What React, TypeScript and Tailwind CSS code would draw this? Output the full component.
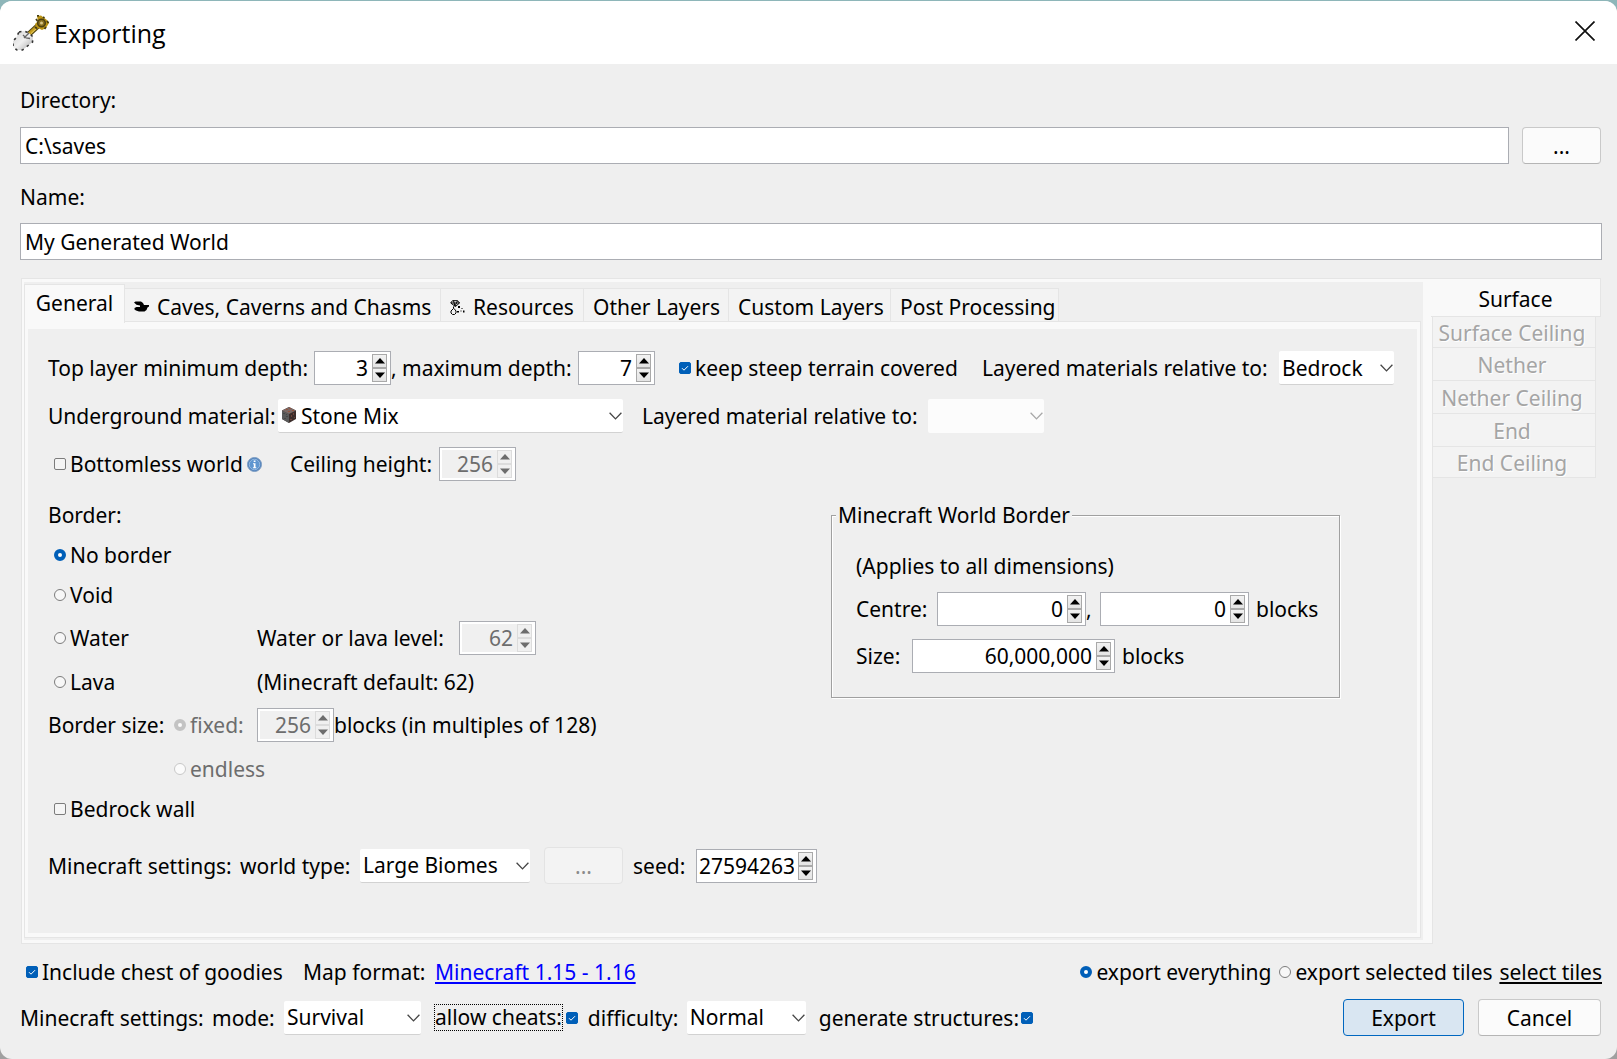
import { useId, useState } from "react";
import type { ReactNode } from "react";
import clsx from "clsx";

function Spinner({ id, label, value, width, disabled = false }: { id: string; label?: string; value: string; width: string; disabled?: boolean }) {
  const [text, setText] = useState(value);
  const step = (by: number) => {
    const next = Number(text.replace(/,/g, "")) + by;
    setText(value.includes(",") ? next.toLocaleString("en-US") : String(next));
  };
  const arrow = clsx(
    "flex h-3.5 w-[15px] items-center justify-center border",
    disabled ? "border-[#dcdcdc] bg-[#f0f0f0] text-[#6d6d6d]" : "border-[#a9a9a9] bg-linear-to-b from-[#f2f2f2] to-[#e4e4e4] text-black",
  );
  return (
    <div className={clsx("flex h-[34px] shrink-0 border border-[#abadb3] bg-white p-0.5", width)}>
      <input
        id={id}
        aria-label={label}
        value={text}
        onChange={(e) => setText(e.target.value)}
        disabled={disabled}
        className={clsx("h-full min-w-0 flex-1 pr-1 text-right outline-none", disabled && "bg-[#f0f0f0] text-[#6d6d6d]")}
      />
      <div className="flex flex-col pr-px">
        <button type="button" aria-label="Increase" disabled={disabled} onClick={() => step(1)} className={arrow}>
          <svg viewBox="0 0 10 6" className="h-1.5 w-2.5 shrink-0" fill="currentColor"><path d="M5 0 10 5.5H0z" /></svg>
        </button>
        <button type="button" aria-label="Decrease" disabled={disabled} onClick={() => step(-1)} className={arrow}>
          <svg viewBox="0 0 10 6" className="h-1.5 w-2.5 shrink-0" fill="currentColor"><path d="M5 6 10 .5H0z" /></svg>
        </button>
      </div>
    </div>
  );
}

function Select({ id, options, width, disabled = false, icon }: { id: string; options: string[]; width: string; disabled?: boolean; icon?: ReactNode }) {
  return (
    <div className={clsx("relative flex shrink-0", width)}>
      <select
        id={id}
        disabled={disabled}
        className={clsx(
          "h-[34px] w-full appearance-none rounded-xs pr-4 outline-none",
          icon ? "pl-[23px]" : "pl-[3px]",
          disabled ? "bg-[#fcfcfc] opacity-100" : "border-b border-[#d2d2d2] bg-white",
        )}
      >
        {options.map((o) => (
          <option key={o}>{o}</option>
        ))}
      </select>
      {icon && <span className="pointer-events-none absolute top-2 left-1">{icon}</span>}
      <svg
        viewBox="0 0 13 8"
        className={clsx("pointer-events-none absolute top-[13px] right-px h-2 w-[13px]", disabled ? "text-[#a8a8a8]" : "text-[#454545]")}
        fill="none"
        stroke="currentColor"
        strokeWidth="1.3"
      >
        <path d="M.6.8 6.5 6.9 12.4.8" />
      </svg>
    </div>
  );
}

function Box({ id, checked = false }: { id: string; checked?: boolean }) {
  return (
    <span className="relative flex size-3 shrink-0">
      <input
        id={id}
        type="checkbox"
        defaultChecked={checked}
        className="peer size-3 appearance-none rounded-xs border border-[#7c7c7c] bg-[#f5f5f5] checked:border-[#005fb8] checked:bg-[#005fb8]"
      />
      <svg viewBox="0 0 12 12" className="pointer-events-none absolute inset-0 hidden size-3 peer-checked:block" fill="none" stroke="#fff" strokeWidth="1">
        <path d="M3 6.2 5 8.2 9 4.2" />
      </svg>
    </span>
  );
}

function Check({ text, checked, width }: { text: string; checked?: boolean; width?: string }) {
  const id = useId();
  return (
    <div className={clsx("flex shrink-0 items-center gap-1", width)}>
      <Box id={id} checked={checked} />
      <label htmlFor={id}>{text}</label>
    </div>
  );
}

function Radio({ text, name, checked, disabled, width }: { text: string; name: string; checked?: boolean; disabled?: boolean; width?: string }) {
  const id = useId();
  return (
    <div className={clsx("flex shrink-0 items-center gap-1", width)}>
      <input
        id={id}
        type="radio"
        name={name}
        defaultChecked={checked}
        disabled={disabled}
        className="size-3 shrink-0 appearance-none rounded-full border border-[#7c7c7c] bg-[#f7f7f7] checked:border-4 checked:border-[#005fb8] checked:bg-white disabled:border-[#c8c8c8] disabled:bg-[#fbfbfb] disabled:checked:border-[#c3c3c3]"
      />
      <label htmlFor={id} className={clsx(disabled && "text-[#6d6d6d]")}>{text}</label>
    </div>
  );
}

function ShovelIcon() {
  return (
    <svg viewBox="0 0 36 36" className="size-9 shrink-0">
      <defs>
        <linearGradient id="blade" x1="0" y1="0" x2="1" y2="1">
          <stop offset="0" stopColor="#d2d2d2" />
          <stop offset=".5" stopColor="#f0f0f0" />
          <stop offset="1" stopColor="#a8a8a8" />
        </linearGradient>
      </defs>
      <path d="M15 20 28 8" stroke="#4d4212" strokeWidth="5.500" />
      <path d="M16 19 28 8" stroke="#c39c1d" strokeWidth="3.500" />
      <path d="m18 18.500 9-8.500" stroke="#ecd06a" strokeWidth="1" />
      <path d="m24 1 4-.5L34 5l2 3-3 5-4 2-6-3-1-3 3-3z" fill="#bb9414" />
      <path d="m24 .8 2-.3M23 4l1.500 2M30 2l1.500 1M34 6l1.500 2M22 12l2 1.500M33 12l-1.500 2" stroke="#463c12" strokeWidth="1.800" />
      <circle cx="28.500" cy="8" r="3.800" fill="#8a7020" stroke="#4d4112" strokeWidth="1.600" />
      <circle cx="28.500" cy="8" r="1.500" fill="#d8c687" />
      <path d="m6 17 5-1 5 2 4 4-.5 5-5 4-5 4H4l-4-3v-6l3-3z" fill="url(#blade)" />
      <path d="m6 17 5-1 5 2 4 4-.5 5-5 4-5 4H4l-4-3v-6l3-3z" fill="none" stroke="#333" strokeWidth="1.600" strokeDasharray="2.500 4" />
      <path d="m11 23 5-5M10 20l3 3 4 .5" stroke="#666" strokeWidth="1.300" fill="none" />
    </svg>
  );
}

function CaveIcon() {
  return (
    <svg viewBox="0 0 15 12" className="h-3 w-[15px] shrink-0">
      <path d="M0 1.500 1.500.5h5.500l2 1.500 1 2h5v1.500l-1.500 1-1 2.500-2 1.500H5L2 9.500.5 8.500V7l2-1H6V4.500L2.500 3.800z" fill="#000" />
    </svg>
  );
}

function ResourcesIcon() {
  return (
    <svg viewBox="0 0 15 15" className="size-[15px] shrink-0" fill="none" stroke="#000">
      <path d="M2.500.7h5L9.500 3 5.500 6.500.7 3zM1 3h8.500M3.500.7 5 6.200 7.500.7" />
      <path d="M3.500 6.500v2L1 11v2l1.500 1.500h2L6 13v-2L4 8.500" />
      <path d="M8 6h2v2H8zM11.500 8h1v1h-1zM7 11h2v1.500H7zM10.500 10.500h1v1h-1zM13 10.500h1.500v2H13z" fill="#000" stroke="none" />
    </svg>
  );
}

function StoneIcon() {
  return (
    <svg viewBox="0 0 14 16" className="h-4 w-3.5">
      <path d="M7 0 14 3.500V12L7 16 0 12V3.500z" fill="#3c2e2b" />
      <path d="M0 3.500 7 7v9L0 12z" fill="#5a5a5a" />
      <path d="M7 0 14 3.500 7 7 0 3.500z" fill="#7b6a66" />
      <path d="M7 1h2v1H7zM10 3h2v1h-2zM4 2h2v1H4zM6 4h2v1H6z" fill="#94533f" />
      <path d="M9 8h1v2H9zM11 6h1v2h-1zM12 10h1v1h-1zM8 12h2v1H8z" fill="#70443a" />
      <path d="M1 6h2v1H1zM4 9h2v1H4zM2 11h2v1H2zM4 7h1v1H4z" fill="#474747" />
    </svg>
  );
}

function InfoIcon() {
  return (
    <svg viewBox="0 0 15 15" className="size-[15px] shrink-0">
      <circle cx="7.500" cy="7.500" r="7" fill="#4a7ebb" stroke="#7d9dc2" />
      <circle cx="7.500" cy="7.500" r="5.300" fill="#5f96d0" stroke="#a9c6e6" strokeWidth=".8" />
      <path d="M6.700 3.500h1.800v1.500H6.700zM6 6.200h2.500v4H9.300v1.100H5.900v-1.100h.9V7.300H6z" fill="#fff" />
    </svg>
  );
}

const tabs: { text: string; width: string; icon?: ReactNode }[] = [
  { text: "Caves, Caverns and Chasms", width: "w-[316px]", icon: <CaveIcon /> },
  { text: "Resources", width: "w-[143px]", icon: <ResourcesIcon /> },
  { text: "Other Layers", width: "w-[145px]" },
  { text: "Custom Layers", width: "w-[162px]" },
  { text: "Post Processing", width: "w-[168px]" },
];

const dimensions = [
  { text: "Surface Ceiling", height: "h-[31px]" },
  { text: "Nether", height: "h-[33px]" },
  { text: "Nether Ceiling", height: "h-[33px]" },
  { text: "End", height: "h-[33px]" },
  { text: "End Ceiling", height: "h-[31px]" },
];

const button = "h-[37px] shrink-0 rounded-sm border border-[#c9c9c9] border-b-[#b5b5b5] bg-[#fbfbfb]";

function GeneralPanel() {
  return (
    <div role="tabpanel" className="flex-1 bg-[#efefef] pt-[22px] pl-5">
      <div className="flex flex-col gap-3.5">
        <div className="flex items-center">
          <label htmlFor="min-depth" className="w-[266px] shrink-0">Top layer minimum depth:</label>
          <Spinner id="min-depth" value="3" width="w-[77px]" />
          <label htmlFor="max-depth" className="w-[187px] shrink-0">, maximum depth:</label>
          <Spinner id="max-depth" value="7" width="w-[77px]" />
          <div className="ml-6 flex w-[303px] shrink-0">
            <Check text="keep steep terrain covered" checked />
          </div>
          <label htmlFor="relative-to" className="w-[297px] shrink-0">Layered materials relative to:</label>
          <Select id="relative-to" options={["Bedrock"]} width="w-[115px]" />
        </div>
        <div className="flex items-center">
          <label htmlFor="underground" className="w-[230px] shrink-0">Underground material:</label>
          <Select id="underground" options={["Stone Mix"]} width="w-[345px]" icon={<StoneIcon />} />
          <label htmlFor="material-relative" className="ml-[19px] w-[286px] shrink-0">Layered material relative to:</label>
          <Select id="material-relative" options={[""]} width="w-[116px]" disabled />
        </div>
        <div className="flex items-center pl-1.5">
          <Check text="Bottomless world" width="w-[193px]" />
          <InfoIcon />
          <label htmlFor="ceiling" className="ml-7 w-[149px] shrink-0">Ceiling height:</label>
          <Spinner id="ceiling" value="256" width="w-[77px]" disabled />
        </div>
      </div>

      <div className="mt-5 flex items-start">
        <div className="flex w-[783px] shrink-0 flex-col gap-3">
          <div>Border:</div>
          <Radio name="border" text="No border" checked width="pl-1.5" />
          <Radio name="border" text="Void" width="pl-1.5" />
          <div className="flex items-center">
            <Radio name="border" text="Water" width="w-[209px] pl-1.5" />
            <label htmlFor="level" className="w-[202px] shrink-0">Water or lava level:</label>
            <Spinner id="level" value="62" width="w-[77px]" disabled />
          </div>
          <div className="flex h-[29px] items-center">
            <Radio name="border" text="Lava" width="w-[209px] pl-1.5" />
            <span>(Minecraft default: 62)</span>
          </div>
          <div className="flex items-center">
            <span className="w-[126px] shrink-0">Border size:</span>
            <Radio name="size" text="fixed:" checked disabled width="w-[83px]" />
            <Spinner id="fixed-size" label="Fixed border size" value="256" width="w-[77px]" disabled />
            <span>blocks (in multiples of 128)</span>
          </div>
          <div className="flex h-[29px] items-center pl-[126px]">
            <Radio name="size" text="endless" disabled />
          </div>
          <Check text="Bedrock wall" width="pl-1.5" />
        </div>

        <fieldset className="w-[509px] shrink-0 border border-[#a0a0a0] pb-6 pl-6 shadow-[1px_1px_0_#fff,inset_1px_1px_0_#fff]">
          <legend className="-ml-5 bg-[#efefef] px-0.5">Minecraft World Border</legend>
          <p className="mt-[23px]">(Applies to all dimensions)</p>
          <div className="mt-3 flex items-center">
            <label htmlFor="centre-x" className="w-[81px] shrink-0">Centre:</label>
            <Spinner id="centre-x" value="0" width="w-[149px]" />
            <span className="w-3.5 shrink-0">,</span>
            <Spinner id="centre-y" label="Centre y" value="0" width="w-[149px]" />
            <span className="ml-[7px]">blocks</span>
          </div>
          <div className="mt-[13px] flex items-center">
            <label htmlFor="world-size" className="w-14 shrink-0">Size:</label>
            <Spinner id="world-size" value="60,000,000" width="w-[203px]" />
            <span className="ml-[7px]">blocks</span>
          </div>
        </fieldset>
      </div>

      <div className="mt-6 flex items-center">
        <span className="w-48 shrink-0">Minecraft settings:</span>
        <label htmlFor="world-type" className="w-[120px] shrink-0">world type:</label>
        <Select id="world-type" options={["Large Biomes"]} width="w-[170px]" />
        <button type="button" disabled className="ml-3.5 h-[37px] w-[79px] shrink-0 rounded-sm border border-[#e3e3e3] bg-[#f3f3f3] text-[#8a8a8a]">...</button>
        <label htmlFor="seed" className="ml-2.5 w-[63px] shrink-0">seed:</label>
        <Spinner id="seed" value="27594263" width="w-[121px]" />
      </div>
    </div>
  );
}

export default function App() {
  return (
    <div className="bg-linear-to-b from-[#8eb6b9] to-[#a0a0a0] pt-px">
      <div className="flex min-h-[calc(100vh-1px)] flex-col overflow-hidden rounded-xl bg-[#efefef] font-['Noto_Sans',sans-serif] text-[21px] leading-7 whitespace-nowrap text-black">
        <header className="flex h-[63px] shrink-0 items-center bg-white pr-[22px] pl-[13px]">
          <ShovelIcon />
          <h1 className="ml-[5px] font-['Open_Sans',sans-serif] text-[25px]">Exporting</h1>
          <button type="button" aria-label="Close" className="ml-auto pb-1">
            <svg viewBox="0 0 20 20" className="size-5" stroke="#111" strokeWidth="1.700"><path d="m.5.5 19 19M19.500.5.5 19.500" /></svg>
          </button>
        </header>

        <main className="flex flex-1 flex-col pt-[22px] pb-[23px]">
          <section className="flex flex-col pr-4 pl-5">
            <label htmlFor="directory">Directory:</label>
            <div className="mt-[13px] flex gap-[13px]">
              <input id="directory" defaultValue={"C:\\saves"} className="h-[37px] min-w-0 flex-1 border border-[#abadb3] bg-white px-1 outline-none" />
              <button type="button" className={clsx(button, "w-[79px]")}>...</button>
            </div>
            <label htmlFor="world-name" className="mt-[19px]">Name:</label>
            <input id="world-name" defaultValue="My Generated World" className="mt-3 -mr-px h-[37px] border border-[#abadb3] bg-white px-1 outline-none" />
          </section>

          <section className="mt-[18px] flex flex-1 pl-[21px]">
            <div className="flex min-w-0 flex-1 flex-col border border-[#e5e5e5] bg-[#f9f9f9] py-[3px] pr-[9px] pl-0.5">
              <div className="flex flex-1 flex-col bg-[#efefef] pt-0.5 pb-0.5">
                <div role="tablist" className="flex items-end">
                  <button type="button" role="tab" aria-selected="true" className="relative -mb-0.5 h-[39px] w-[101px] border border-b-0 border-[#e5e5e5] bg-[#f9f9f9] pb-0.5">
                    General
                  </button>
                  {tabs.map((t) => (
                    <button key={t.text} type="button" role="tab" aria-selected="false" className={clsx("flex h-[33px] items-center gap-2 border-t border-r border-[#e5e5e5] bg-[#f3f3f3] pt-1 pl-[9px]", t.width)}>
                      {t.icon}
                      {t.text}
                    </button>
                  ))}
                </div>
                <div className="mr-0.5 flex flex-1 flex-col border border-[#e5e5e5] bg-[#f9f9f9] px-[3px] pt-[7px] pb-1">
                  <GeneralPanel />
                </div>
              </div>
            </div>
            <div role="tablist" aria-orientation="vertical" className="flex w-[184px] shrink-0 flex-col">
              <button type="button" role="tab" aria-selected="true" className="relative -ml-0.5 h-[39px] w-[170px] border border-l-0 border-[#e5e5e5] bg-[#f9f9f9] pt-0.5">
                Surface
              </button>
              {dimensions.map((d) => (
                <button key={d.text} type="button" role="tab" aria-selected="false" disabled className={clsx("flex w-[163px] items-center justify-center border-r border-b border-[#e5e5e5] bg-[#f3f3f3] pt-0.5 pr-1 text-[#a5a5a5] text-shadow-[1px_1px_0_#fff]", d.height)}>
                  {d.text}
                </button>
              ))}
            </div>
          </section>

          <section className="mt-3.5 flex items-center pr-[15px] pl-[26px]">
            <Check text="Include chest of goodies" checked width="w-[277px]" />
            <span className="w-[132px] shrink-0">Map format:</span>
            <a href="#format" className="text-[#0000ff] underline">Minecraft 1.15 - 1.16</a>
            <div className="ml-auto flex">
              <Radio name="scope" text="export everything" checked width="w-[199px]" />
              <Radio name="scope" text="export selected tiles" width="w-[220px]" />
              <a href="#tiles" className="underline">select tiles</a>
            </div>
          </section>

          <section className="mt-[13px] flex items-center pr-4 pl-5">
            <span className="w-48 shrink-0">Minecraft settings:</span>
            <label htmlFor="mode" className="w-[72px] shrink-0">mode:</label>
            <Select id="mode" options={["Survival"]} width="w-[137px]" />
            <label htmlFor="cheats" className="ml-[13px] border border-dotted border-black leading-[25px]">allow cheats:</label>
            <div className="ml-[3px] flex"><Box id="cheats" checked /></div>
            <label htmlFor="difficulty" className="ml-2.5 w-[99px] shrink-0">difficulty:</label>
            <Select id="difficulty" options={["Normal"]} width="w-[119px]" />
            <label htmlFor="structures" className="ml-[13px] w-[202px] shrink-0">generate structures:</label>
            <Box id="structures" checked />
            <div className="ml-auto flex gap-3.5">
              <button type="button" className="h-[37px] w-[121px] rounded-sm border border-[#0067c0] bg-[#d9e6f2]">Export</button>
              <button type="button" className={clsx(button, "w-[123px]")}>Cancel</button>
            </div>
          </section>
        </main>
      </div>
    </div>
  );
}
